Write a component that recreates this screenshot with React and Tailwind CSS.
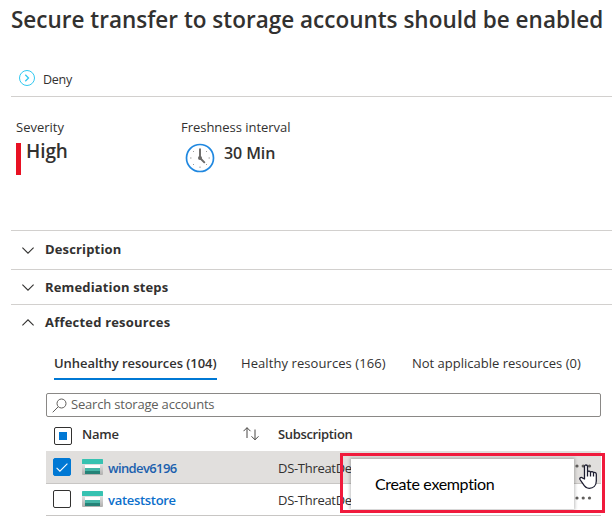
import React from "react";

const Chevron = ({ up }) => (
  <svg width="12" height="7" viewBox="0 0 12 7" fill="none" stroke="#323130" strokeWidth="1.1" className="shrink-0">
    <path d={up ? "M.4 6.4 6 .8l5.600 5.600" : "M.4.6 6 6.200l5.600-5.600"} />
  </svg>
);

const StorageIcon = () => (
  <svg width="21" height="16" viewBox="0 0 21 16" className="shrink-0">
    <defs>
      <linearGradient id="frame" x1="0" y1="0" x2="0" y2="1">
        <stop offset="0" stopColor="#e6e6e6" />
        <stop offset="1" stopColor="#b0afae" />
      </linearGradient>
    </defs>
    <rect y="4" width="21" height="12" rx="1" fill="url(#frame)" />
    <rect width="21" height="5" rx=".6" fill="#37c2b1" />
    <rect x="3" y="6" width="15" height="3" fill="#fff" />
    <rect x="3" y="9" width="15" height="3" fill="#45b5a6" />
    <rect x="3" y="12" width="15" height="3" fill="#258277" />
  </svg>
);

const Dots = () => (
  <svg width="17" height="4" viewBox="0 0 17 4" fill="#605e5c" className="shrink-0">
    <circle cx="2" cy="2" r="1.600" />
    <circle cx="8.200" cy="2" r="1.600" />
    <circle cx="14.500" cy="2" r="1.600" />
  </svg>
);

function Row({ name, checked }) {
  return (
    <div className={`flex border-b border-[#c8c6c4] pl-[7px] ${checked ? "h-[33px] bg-[#e1dfdd] pt-px" : "h-8 bg-white"}`}>
      <div className={`mt-[6px] flex size-[18px] shrink-0 items-center justify-center rounded-[2px] border ${checked ? "border-[#0078d4] bg-[#0078d4]" : "border-[#323130] bg-white"}`}>
        {checked && (
          <svg width="12" height="9" viewBox="0 0 12 9" fill="none" stroke="#fff" strokeWidth="1.1">
            <path d="m.6 4.800 3.300 3.300L11.400.7" />
          </svg>
        )}
      </div>
      <div className="mt-[7px] ml-[11px]"><StorageIcon /></div>
      <div className={`mt-[7px] ml-[5px] w-[170px] shrink-0 text-[13px] leading-[18px] font-semibold ${checked ? "tracking-[-0.62px] text-[#1b5fae]" : "tracking-[-0.3px] text-[#0b6fcb]"}`}>{name}</div>
      <div className="mt-[7px] flex-1 text-[13px] leading-[18px] tracking-[-0.3px] whitespace-nowrap">DS-ThreatDetection</div>
      <div className="mt-[12px] mr-[9px] flex"><Dots /></div>
    </div>
  );
}

export default function App() {
  return (
    <main className="relative h-[516px] w-[612px] overflow-hidden bg-white pl-[11px] font-['Open_Sans',sans-serif] text-[#323130]">
      <header className="h-[97px] border-b border-[#d2d0ce]">
        <h1 className="h-[62px] pt-[5px] text-[22.500px] leading-[30px] font-semibold whitespace-nowrap">Secure transfer to storage accounts should be enabled</h1>
        <button className="flex items-center pt-[7px] pl-[8px]">
          <svg width="16" height="16" viewBox="0 0 16 16" fill="none" stroke="#32c8f0" className="shrink-0">
            <circle cx="8" cy="8" r="7.500" />
            <path d="m6.300 4.800 3.200 3.200-3.200 3.200" strokeWidth="1.300" />
          </svg>
          <span className="relative top-[2px] ml-2 text-[12.500px] leading-[18px] tracking-[-0.25px]">Deny</span>
        </button>
      </header>

      <section className="flex h-[133px] pl-[5px]">
        <div className="w-[165px] pt-[21px]">
          <div className="text-[13px] leading-[18px]">Severity</div>
          <div className="mt-[7px] h-8 border-l-[5px] border-[#e81123] pl-[5px] text-[19px] leading-[18px] font-semibold tracking-[-0.1px]"><span className="relative -top-px">High</span></div>
        </div>
        <div className="pt-[21px]">
          <div className="text-[13px] leading-[18px] tracking-[-0.03px] whitespace-nowrap">Freshness interval</div>
          <div className="mt-[7px] flex pl-1">
            <svg width="30" height="30" viewBox="0 0 30 30">
              <circle cx="15" cy="15" r="13.500" fill="#fff" stroke="#2088e0" strokeWidth="1.700" />
              <path d="M15 23.500V25M5 15h1.500M23.500 15H25M8 8l1 1M21 21l1 1M22 8l-1 1M8 22l1-1" stroke="#a19f9d" strokeWidth="1" />
              <path d="M15 5.500V15l4.800 4.800" stroke="#6b6967" strokeWidth="1.900" fill="none" />
              <circle cx="15" cy="15" r="2" fill="#6b6967" />
            </svg>
            <span className="ml-[9px] text-[16px] leading-[20px] font-semibold tracking-[-0.1px]">30 Min</span>
          </div>
        </div>
      </section>

      <div className="flex h-[39px] items-center gap-[11px] border-t border-[#d2d0ce] pl-[11px] text-[13px] font-bold tracking-[0.15px]"><Chevron />Description</div>
      <div className="flex h-[35px] items-center gap-[11px] border-t border-[#d2d0ce] pt-px pl-[11px] text-[13px] font-bold tracking-[0.15px]"><Chevron />Remediation steps</div>
      <div className="flex h-[36px] items-center gap-[11px] border-t border-[#d2d0ce] pl-[11px] text-[13px] font-bold tracking-[0.2px]"><Chevron up />Affected resources</div>

      <section className="w-[590px] pl-[35px]">
        <nav className="flex h-[53px] pt-[14px] pl-2 text-[13px] leading-[18px] whitespace-nowrap">
          <div className="h-[26px] w-[163px] border-b-2 border-[#0078d4] font-semibold tracking-[-0.06px]">Unhealthy resources (104)</div>
          <div className="ml-6 w-[147px] tracking-[0.08px]">Healthy resources (166)</div>
          <div className="ml-6">Not applicable resources (0)</div>
        </nav>
        <div className="flex h-6 items-center rounded-[2px] border border-[#8a8886] pl-[5px] text-[13px] leading-[18px] text-[#605e5c]">
          <svg width="15" height="15" viewBox="0 0 15 15" fill="none" stroke="#605e5c" className="mt-px">
            <circle cx="9.500" cy="5.500" r="4.500" />
            <path d="M6.200 8.800.7 14.300" />
          </svg>
          <span className="mb-[2px] ml-1 tracking-[-0.19px]">Search storage accounts</span>
        </div>
        <div className="flex h-[34px] pl-2 text-[13px] leading-[18px] font-semibold">
          <div className="mt-[10px] flex size-[18px] items-center justify-center rounded-[2px] border border-[#323130]"><div className="size-2 bg-[#0078d4]" /></div>
          <div className="mt-[8px] ml-[10px] w-[161px] tracking-[-0.25px]">Name</div>
          <svg width="16" height="14" viewBox="0 0 16 14" fill="none" stroke="#484644" className="mt-[10px]">
            <path d="M4 11V.7M.5 4.200 4 .7l3.500 3.500M12 2.500v10.300M8.500 9.300l3.500 3.500 3.500-3.500" />
          </svg>
          <div className="mt-[8px] ml-[19px] tracking-[-0.35px]">Subscription</div>
        </div>
        <Row name="windev6196" checked />
        <Row name="vateststore" />
      </section>

      <div className="absolute top-[459px] left-[351px] flex h-[50px] w-[223px] items-center bg-white pl-6 font-[Lato,sans-serif] text-[16px] tracking-[-0.33px] text-black shadow-[0_0_3px_1px_rgba(0,0,0,0.25)]">Create exemption</div>
      <div className="absolute top-[453px] left-[340px] h-[60px] w-[265px] border-[3px] border-[#f01a3c]" />
      <svg className="absolute top-[464px] left-[579px]" width="19" height="26" viewBox="0 0 19 26" fill="#fff" stroke="#1c1c30" strokeWidth="1.300" strokeLinejoin="round">
        <path d="M5.500 15V2.500c0-2 3-2 3 0V8c.3-1.300 2.800-1.200 3 .4.500-1.200 2.800-1 3 .6.700-1 2.800-.6 2.800 1.200V17c0 4.500-3 7.300-7 7.300-3.500 0-5-2-6.300-4.500L1 15.500c-.8-1.800 1.300-2.700 2.300-1.600zM8.500 8v4.500M11.500 8.500v4M14.500 9v3.500" />
      </svg>
    </main>
  );
}
